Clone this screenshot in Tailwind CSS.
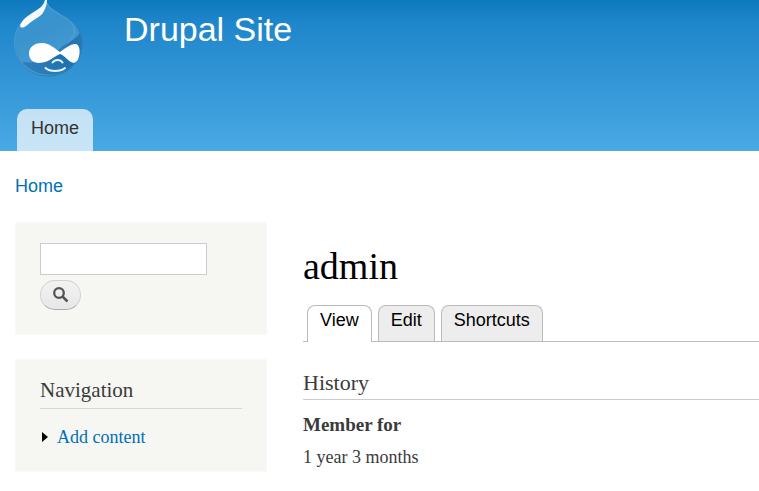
<!DOCTYPE html>
<html lang="en">
<head>
<meta charset="utf-8">
<title>admin | Drupal Site</title>
<script src="https://cdn.jsdelivr.net/npm/@tailwindcss/browser@4"></script>
</head>
<body class="bg-white font-['Liberation_Serif',serif] text-[#3b3b3b]">
<header class="bg-linear-to-b from-[#0d79be] via-[#1e86cb] via-15% to-[#48a9e4] font-['Liberation_Sans',sans-serif]">
  <div class="flex h-[109px] items-start gap-10 pl-3">
    <a href="#" aria-label="Drupal Site home" class="block shrink-0">
      <svg class="block h-20 w-18" viewBox="12 0 72 80" aria-hidden="true">
        <defs>
          <linearGradient id="drop" x1="0" y1="0" x2="0.35" y2="1">
            <stop offset="0" stop-color="#3492cf"/><stop offset=".5" stop-color="#3a93cd"/><stop offset="1" stop-color="#4a9dd2"/>
          </linearGradient>
          <linearGradient id="shine" x1="1" y1="0" x2="0" y2="1">
            <stop offset="0" stop-color="#fff" stop-opacity=".9"/><stop offset=".55" stop-color="#fff" stop-opacity=".95"/><stop offset="1" stop-color="#fff"/>
          </linearGradient>
          <linearGradient id="shade" x1="1" y1="0" x2="0" y2="1">
            <stop offset="0" stop-color="#2679b3"/><stop offset=".5" stop-color="#1f72ae"/><stop offset="1" stop-color="#3184be"/>
          </linearGradient>
          <linearGradient id="rim" x1="0" y1="0" x2="1" y2="1">
            <stop offset="0" stop-color="#5fb0e0"/><stop offset=".5" stop-color="#3585bd"/><stop offset="1" stop-color="#1a6aa3"/>
          </linearGradient>
        </defs>
        <path d="M46 0C47 8 57 12 67 18C77 24 82 33 82 43C82 62 67 76 48 76C29 76 14.500 62 14.500 43C14.500 30 20 23 29 16C38 10 44 8 46 0Z" fill="url(#drop)" stroke="url(#rim)"/>
        <path d="M80 32C84 48 80 60 69 68.500C55 79 33 76 22 62C40 64 52 58 60 49C66 42 77 40 80 32Z" fill="url(#shade)"/>
        <path d="M46 1C47 7 55 12 64 17C73 22 77 29 73 36C70 43 65 46 60 51" fill="none" stroke="#69b4e2" stroke-opacity=".4"/>
        <path d="M45 0L47 0C47 4 46 7 44 11C41 17 36 18 31 22C27 25 25 28 21 27.500C18 25 24 18 30 14.500C36 10 43 8 45 0Z" fill="url(#shine)"/>
        <path d="M29 54C29 47 34 43 42 43C50 43 55 49 60 52C64 49 71 43.500 76 44C79 45 80 49 79.500 53C79 60 76 64 72 62.500C67 60 64 55 60 54C54 56 50 62.500 39 63C33 63 29 59 29 54Z" fill="#fff"/>
        <path d="M52.500 62.500C55 59 60.500 59 62.500 62.500" fill="none" stroke="#e8f5ff" stroke-width="2" stroke-linecap="round"/>
        <path d="M45.500 68C50 72 60 72 65 68" fill="none" stroke="#e8f5ff" stroke-width="2" stroke-linecap="round"/>
      </svg>
    </a>
    <a href="#" class="pt-[9px] text-[34px] leading-10 text-white">Drupal Site</a>
  </div>
  <nav class="flex pl-[17px]" aria-label="Main menu">
    <a href="#" class="h-[42px] rounded-t-[10px] bg-white/70 px-3.5 pt-[5px] text-lg leading-7 text-[#333]">Home</a>
  </nav>
</header>
<nav aria-label="Breadcrumb" class="px-[15px] py-[21px] font-['Liberation_Sans',sans-serif] text-lg leading-7">
  <a href="#" class="text-[#0071b3]">Home</a>
</nav>
<div class="flex items-start gap-9 pl-[15px]">
  <aside class="flex w-[252px] shrink-0 flex-col gap-6 pt-px">
    <form class="flex flex-col items-start gap-[5px] border border-[#f9f9f9] bg-[#f6f6f2] px-6 pt-5 pb-6" onsubmit="return false">
      <input type="text" aria-label="Search" class="h-8 w-[167px] border border-[#ccc] bg-white px-1 text-base">
      <button type="submit" aria-label="Search" class="flex h-[30px] w-[41px] items-center justify-center rounded-[15px] border border-[#d2d2d2] border-b-[#aaa] bg-linear-to-b from-[#f3f3f3] to-[#e7e7e7]">
        <svg class="size-4" viewBox="0 0 16 16" fill="none" stroke="#555" aria-hidden="true"><circle cx="6" cy="6" r="4.800" stroke-width="2.300"/><path d="M9.500 9.500L14.500 14.500" stroke-width="2.500"/></svg>
      </button>
    </form>
    <section class="border border-[#f9f9f9] bg-[#f6f6f2] px-6 pt-4 pb-5">
      <h2 class="border-b border-[#d6d6d6] pb-1 text-[21px] leading-7">Navigation</h2>
      <ul class="pt-3.5">
        <li class="flex items-center gap-[9px] pl-[2px] text-lg leading-7">
          <svg class="h-2.5 w-1.5" viewBox="0 0 6 10" aria-hidden="true"><path d="M0 0L6 5L0 10Z" fill="#000"/></svg>
          <a href="#" class="text-[#0071b3]">Add content</a>
        </li>
      </ul>
    </section>
  </aside>
  <main class="min-w-0 flex-1 pt-[23px]">
    <h1 class="text-[38px] leading-[44px] text-black">admin</h1>
    <nav aria-label="Primary tabs" class="mt-[17px] flex gap-1.5 border-b border-[#bbb] pl-1 font-['Liberation_Sans',sans-serif] text-lg leading-7 text-black">
      <a href="#" aria-current="page" class="-mb-px h-[37px] rounded-t-lg border border-b-0 border-[#bbb] bg-white px-3">View</a>
      <a href="#" class="h-9 rounded-t-lg border border-b-0 border-[#bbb] bg-[#ededed] px-3">Edit</a>
      <a href="#" class="h-9 rounded-t-lg border border-b-0 border-[#bbb] bg-[#ededed] px-3">Shortcuts</a>
    </nav>
    <h2 class="mt-[27px] border-b border-[#ccc] pb-[2px] text-[22px] leading-7">History</h2>
    <dl class="pt-[9px] text-[19px] leading-8">
      <dt class="font-bold">Member for</dt>
      <dd class="text-lg leading-8">1 year 3 months</dd>
    </dl>
  </main>
</div>
</body>
</html>
